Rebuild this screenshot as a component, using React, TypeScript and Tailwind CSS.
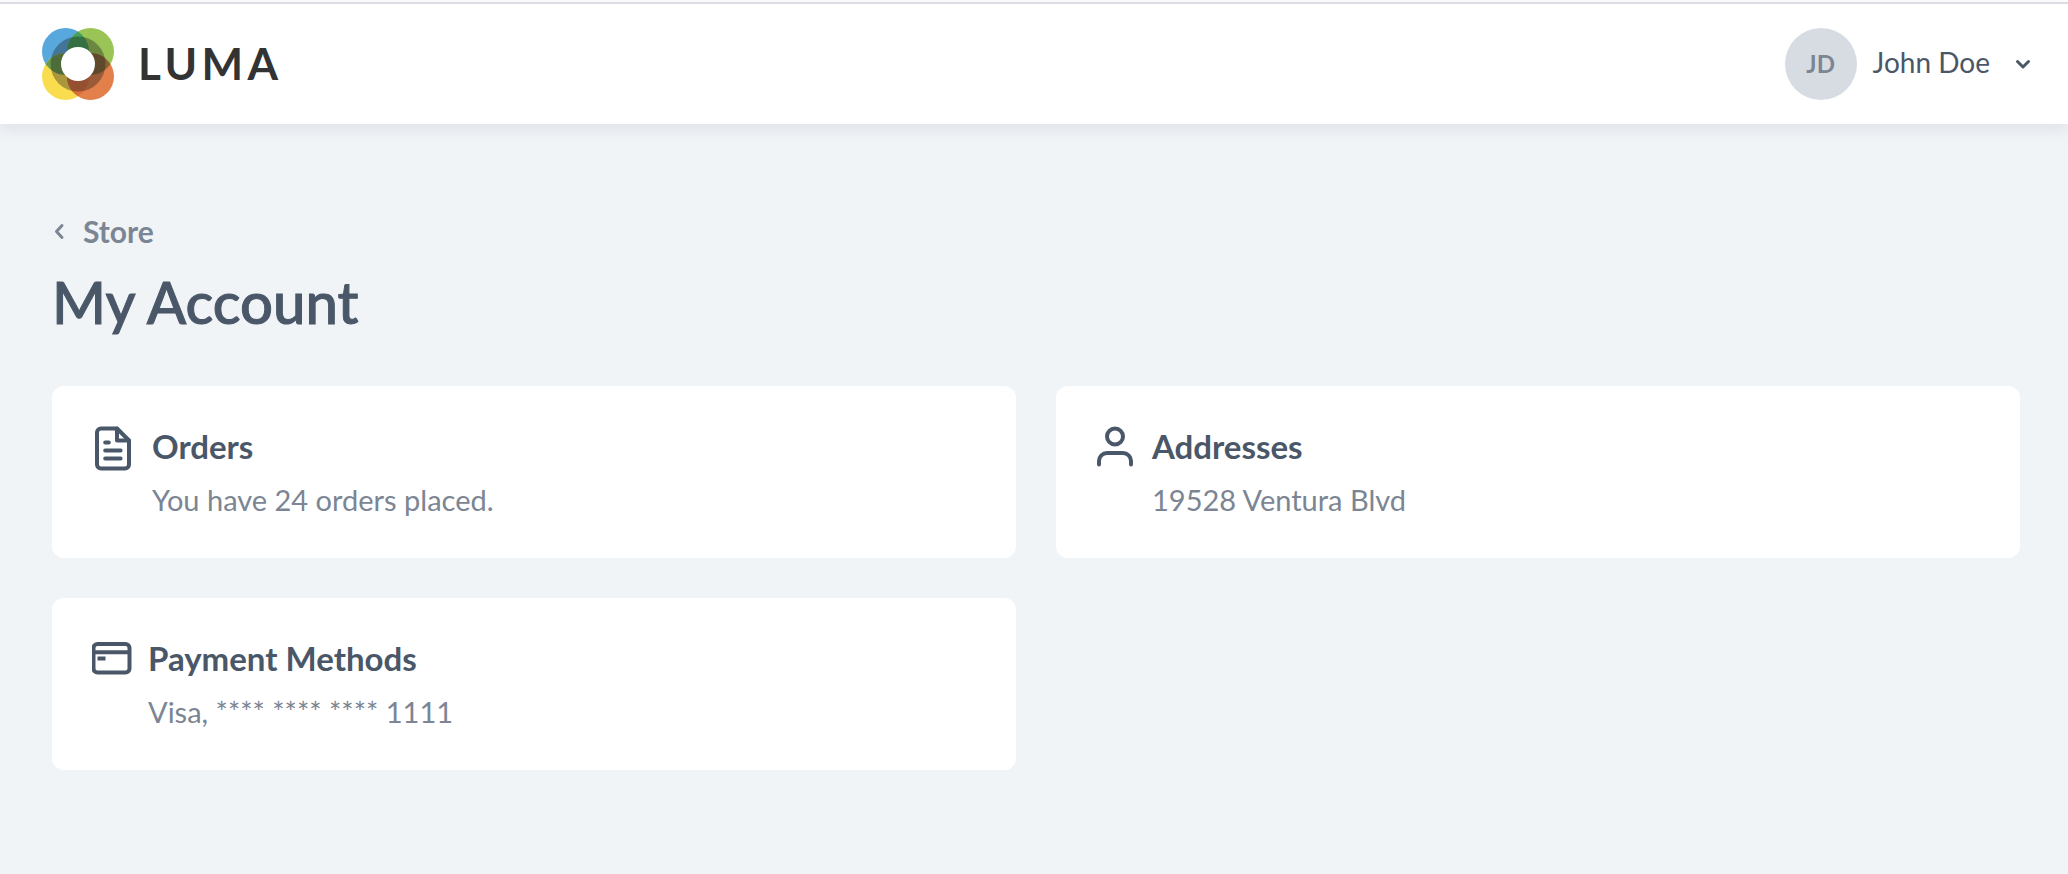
import type { ReactNode } from "react";

const petals = {
  blue: { cx: 23.5, cy: 23.5 },
  green: { cx: 48.5, cy: 23.5 },
  yellow: { cx: 23.5, cy: 48.5 },
  orange: { cx: 48.5, cy: 48.5 },
};

function LumaMark() {
  return (
    <svg viewBox="0 0 72 72" className="size-18" aria-hidden="true">
      <defs>
        <clipPath id="clip-blue"><circle {...petals.blue} r="23.5" /></clipPath>
        <clipPath id="clip-orange"><circle {...petals.orange} r="23.5" /></clipPath>
        <clipPath id="clip-petals">
          <circle {...petals.blue} r="23.5" />
          <circle {...petals.green} r="23.5" />
          <circle {...petals.yellow} r="23.5" />
          <circle {...petals.orange} r="23.5" />
        </clipPath>
      </defs>
      <circle {...petals.blue} r="23.5" fill="#58a8de" />
      <circle {...petals.green} r="23.5" fill="#9ac455" />
      <circle {...petals.yellow} r="23.5" fill="#fadd4e" />
      <circle {...petals.orange} r="23.5" fill="#e37f4a" />
      <circle {...petals.green} r="23.5" fill="#44a05a" clipPath="url(#clip-blue)" />
      <circle {...petals.yellow} r="23.5" fill="#6b9a4c" clipPath="url(#clip-blue)" />
      <circle {...petals.green} r="23.5" fill="#866434" clipPath="url(#clip-orange)" />
      <circle {...petals.yellow} r="23.5" fill="#d9703a" clipPath="url(#clip-orange)" />
      <circle cx="36" cy="36" r="27.5" fill="#1c1c1c" fillOpacity="0.36" clipPath="url(#clip-petals)" />
      <circle cx="36" cy="36" r="17" fill="#fff" />
    </svg>
  );
}

function DocumentIcon() {
  return (
    <svg viewBox="0 0 22 24" className="h-12 w-11" fill="none" stroke="currentColor" strokeWidth="2" strokeLinecap="round" strokeLinejoin="round" aria-hidden="true">
      <path d="M12.500 1.250H4.500a2 2 0 0 0-2 2v16a2 2 0 0 0 2 2h12a2 2 0 0 0 2-2V7.250Z" />
      <path d="M12.500 1.250v6h6M6.600 8.250h1.800M6.600 12.250h7.700M6.600 16.250h7.700" />
    </svg>
  );
}

function PersonIcon() {
  return (
    <svg viewBox="0 0 20 24" className="h-12 w-10" fill="none" stroke="currentColor" strokeWidth="2" strokeLinecap="round" aria-hidden="true">
      <circle cx="9.500" cy="5.250" r="4" />
      <path d="M1.500 19.250V17.500a4 4 0 0 1 4-4h8a4 4 0 0 1 4 4v1.750" />
    </svg>
  );
}

function CardIcon() {
  return (
    <svg viewBox="0 0 20 24" className="h-12 w-10" fill="none" stroke="currentColor" strokeWidth="2" aria-hidden="true">
      <rect x="0.750" y="3" width="18" height="14.250" rx="2" />
      <path d="M0.750 7.100h18" />
      <path d="M2.750 10.250h4" />
    </svg>
  );
}

function AccountCard({ icon, title, detail }: { icon: ReactNode; title: string; detail: string }) {
  return (
    <a href="#" className="flex gap-4 rounded-xl bg-white px-10 pt-10 pb-[38px]">
      <span className="shrink-0">{icon}</span>
      <span className="flex flex-col gap-3.5">
        <span className="text-[33px] leading-10 font-bold">{title}</span>
        <span className="text-[29px] leading-10 text-[#7b8593]">{detail}</span>
      </span>
    </a>
  );
}

export default function App() {
  return (
    <div className="min-h-screen bg-[#f0f4f7] font-[Lato,sans-serif] text-[#4a5768]">
      <div className="h-0.5 bg-white" />
      <header className="flex items-center justify-between border-t-2 border-[#dcdde4] bg-white py-6 pr-9 pl-[42px] shadow-[0_4px_16px_rgba(60,60,90,0.11)]">
        <a href="#" className="flex items-center gap-6">
          <LumaMark />
          <span className="pb-0.5 text-[44px] leading-none font-bold tracking-widest text-[#333333]">LUMA</span>
        </a>
        <button type="button" className="flex items-center">
          <span className="mr-4 flex size-18 items-center justify-center rounded-full bg-[#d7dce3] text-2xl font-bold text-[#7b8593]">JD</span>
          <span className="pb-1 text-[28px] leading-10">John Doe</span>
          <svg viewBox="0 0 18 12" className="ml-6 h-3 w-[18px]" fill="none" stroke="currentColor" strokeWidth="3" strokeLinecap="round" strokeLinejoin="round" aria-hidden="true">
            <path d="M3.500 3.500 9 9l5.500-5.500" />
          </svg>
        </button>
      </header>
      <main className="pt-[87px] pr-12 pb-24 pl-[52px]">
        <a href="#" className="flex w-fit items-center gap-[17px] text-[30px] leading-10 font-bold text-[#7b8593]">
          <svg viewBox="0 0 14 18" className="h-[18px] w-3.5" fill="none" stroke="currentColor" strokeWidth="3" strokeLinecap="round" strokeLinejoin="round" aria-hidden="true">
            <path d="M10 3.500 4.500 9.500l5.500 6" />
          </svg>
          Store
        </a>
        <h1 className="mt-[15px] text-[58px] leading-[72px] font-medium [-webkit-text-stroke:1px_currentColor]">My Account</h1>
        <div className="mt-12 grid grid-cols-2 gap-10">
          <AccountCard icon={<DocumentIcon />} title="Orders" detail="You have 24 orders placed." />
          <AccountCard icon={<PersonIcon />} title="Addresses" detail="19528 Ventura Blvd" />
          <AccountCard icon={<CardIcon />} title="Payment Methods" detail="Visa, **** **** **** 1111" />
        </div>
      </main>
    </div>
  );
}
